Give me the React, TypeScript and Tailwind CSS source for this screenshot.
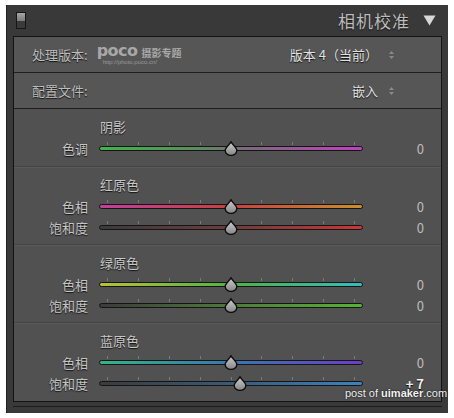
import React from 'react'

type Row = { label: string; track: string; value: number; text?: string }
type Section = { title: string; height: string; rows: Row[] }

const sections: Section[] = [
  {
    title: '阴影',
    height: 'h-[57px]',
    rows: [
      { label: '色调', track: 'bg-[linear-gradient(to_right,#3fb548,#5d8a5d_40%,#7b6a7b_55%,#c23fc2)]', value: 0 },
    ],
  },
  {
    title: '红原色',
    height: 'h-[78px]',
    rows: [
      { label: '色相', track: 'bg-[linear-gradient(to_right,#c23f9c,#c8403f_50%,#c98f2d)]', value: 0 },
      { label: '饱和度', track: 'bg-[linear-gradient(to_right,#3b3b3b,#6e3c3c_50%,#cc3535)]', value: 0 },
    ],
  },
  {
    title: '绿原色',
    height: 'h-[78px]',
    rows: [
      { label: '色相', track: 'bg-[linear-gradient(to_right,#b9c233,#4fb443_50%,#33bcbc)]', value: 0 },
      { label: '饱和度', track: 'bg-[linear-gradient(to_right,#3b3b3b,#4f7a3d_50%,#55b433)]', value: 0 },
    ],
  },
  {
    title: '蓝原色',
    height: 'h-[79px]',
    rows: [
      { label: '色相', track: 'bg-[linear-gradient(to_right,#34b486,#3a76ae_50%,#6a3ec6)]', value: 0 },
      { label: '饱和度', track: 'bg-[linear-gradient(to_right,#3b3b3b,#3a5a78_50%,#3c82c0)]', value: 7, text: '+ 7' },
    ],
  },
]

function Thumb() {
  return (
    <svg width="14" height="15" viewBox="0 0 14 15">
      <defs>
        <linearGradient id="tg" x1="0" y1="0" x2="0" y2="1">
          <stop offset="0" stopColor="#cfcfcf" />
          <stop offset="1" stopColor="#858585" />
        </linearGradient>
      </defs>
      <path
        d="M7 0.8 C8 3.5 12.8 6.2 12.8 9.4 A5.8 5 0 0 1 1.2 9.4 C1.2 6.2 6 3.5 7 0.8 Z"
        fill="url(#tg)"
        stroke="#0d0d0d"
        strokeWidth="1.4"
      />
    </svg>
  )
}

function Stepper() {
  return (
    <svg width="7" height="10" viewBox="0 0 7 10" className="ml-[10px]">
      <path d="M3.5 1 L6 4 H1 Z" fill="#8a8a8a" />
      <path d="M3.5 9 L6 6 H1 Z" fill="#8a8a8a" />
    </svg>
  )
}

function Slider({ row }: { row: Row }) {
  const left = 132 + (row.value / 100) * 132
  return (
    <div className="flex h-[21px] items-center">
      <div className="w-[74px] text-right text-[13px] leading-[18px] text-[#c4c4c4] [text-shadow:0_1px_1px_#111]">{row.label}</div>
      <div className="relative ml-[11px] h-[21px] w-[264px]">
        <div className="absolute left-0 right-0 top-[4px] flex justify-between px-[8px]">
          {Array.from({ length: 9 }).map((_, i) => (
            <div key={i} className="h-[3px] w-px bg-[#7a7a7a]" />
          ))}
        </div>
        <div className={`absolute left-0 right-0 top-[8px] h-[5px] rounded-full border border-[#151515] ${row.track}`} />
        <div className="absolute top-[3px]" style={{ left: left - 7 }}>
          <Thumb />
        </div>
      </div>
      <div
        className={`w-[61px] text-right text-[13px] leading-[18px] ${
          row.text ? 'font-bold text-[#f0f0f0] [text-shadow:0_1px_1px_#000]' : 'text-[#bdbdbd]'
        }`}
      >
        {row.text ?? row.value}
      </div>
    </div>
  )
}

export default function App() {
  return (
    <div className="relative h-[418px] w-[454px] bg-white pl-[6px] pt-[5px] font-['Noto_Sans_CJK_SC','Noto_Sans',sans-serif]">
      <div className="h-[408px] w-[442px] border-l border-[#222] bg-[#393939]">
        {/* header */}
        <div className="flex h-[31px] items-center pl-[9px] pr-[12px]">
          <div className="flex h-[17px] w-[10px] flex-col border border-[#161616]">
            <div className="h-1/2 bg-[linear-gradient(to_bottom,#a6a6a6,#7a7a7a)]" />
            <div className="h-1/2 bg-[#3a3a3a]" />
          </div>
          <div className="ml-auto text-[17px] tracking-[1px] text-[#bcbcbc] [text-shadow:0_1px_1px_#111]">相机校准</div>
          <svg width="13" height="11" viewBox="0 0 13 11" className="ml-[13px]">
            <path d="M0.5 0.5 H12.5 L6.5 10.5 Z" fill="#d8d8d8" />
          </svg>
        </div>

        {/* inner panel */}
        <div className="ml-[6px] h-[366px] w-[429px] border border-[#141414] bg-[#515151]">
          <div className="flex h-[36px] items-center border-b border-[#1e1e1e] bg-[#565656] pl-[18px] pr-[46px]">
            <span className="text-[13px] text-[#bdbdbd] [text-shadow:0_1px_1px_#111]">处理版本:</span>
            <div className="ml-[9px] flex flex-col leading-none text-[#a8a8a8]">
              <div className="flex items-end gap-[4px]">
                <span className="font-['DejaVu_Sans',sans-serif] text-[16px] font-semibold leading-[16px] tracking-[-0.5px]">poco</span>
                <span className="text-[10px] font-bold leading-[12px]">摄影专题</span>
              </div>
              <span className="ml-[6px] font-['Liberation_Sans',sans-serif] text-[6px] leading-[7px] text-[#999]">http://photo.poco.cn/</span>
            </div>
            <span className="ml-auto text-[13px] text-[#e2e2e2] [text-shadow:0_1px_1px_#111]">版本 4（当前）</span>
            <Stepper />
          </div>
          <div className="flex h-[36px] items-center border-b border-[#1e1e1e] bg-[#565656] pl-[18px] pr-[46px]">
            <span className="text-[13px] text-[#bdbdbd] [text-shadow:0_1px_1px_#111]">配置文件:</span>
            <span className="ml-auto text-[13px] text-[#e2e2e2] [text-shadow:0_1px_1px_#111]">嵌入</span>
            <Stepper />
          </div>
          {sections.map((s, i) => (
            <div
              key={s.title}
              className={`${s.height} pt-[8px] ${i > 0 ? 'border-t border-[#444] shadow-[inset_0_1px_0_#5a5a5a]' : ''}`}
            >
              <div className="h-[21px] pl-[86px] text-[13px] leading-[20px] text-[#c8c8c8] [text-shadow:0_1px_1px_#111]">
                {s.title}
              </div>
              {s.rows.map((r) => (
                <Slider key={r.label} row={r} />
              ))}
            </div>
          ))}
        </div>
        <div className="ml-[6px] mt-[4px] h-px w-[429px] bg-[#1c1c1c]" />
      </div>

      <div className="absolute left-[345px] top-[387px] font-['Liberation_Sans',sans-serif] text-[11px] leading-[13px] text-[#f2f2f2] [text-shadow:0_0_2px_#000]">
        post of <span className="font-bold">uimaker</span>.com
      </div>
    </div>
  )
}
